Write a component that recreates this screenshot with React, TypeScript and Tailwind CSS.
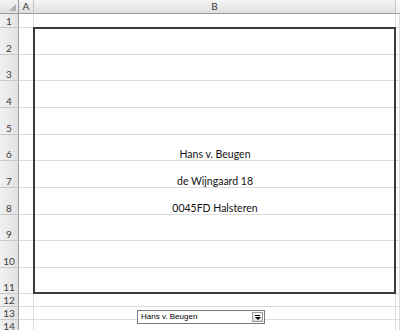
import React from "react";

// full class names so Tailwind picks them up; index = sheet row (0 = header)
const rowStart = [
    "row-start-1", "row-start-2", "row-start-3", "row-start-4", "row-start-5",
    "row-start-6", "row-start-7", "row-start-8", "row-start-9", "row-start-10",
    "row-start-11", "row-start-12", "row-start-13", "row-start-14", "row-start-15",
];
const colStart = ["col-start-1", "col-start-2", "col-start-3", "col-start-4"];

const rows = Array.from({ length: 14 }, (_, i) => i + 1);

const address: [number, string][] = [
    [6, "Hans v. Beugen"],
    [7, "de Wijngaard 18"],
    [8, "0045FD Halsteren"],
];

const RowHeader = ({ n }: { n: number }) => (
    <div
        className={`${rowStart[n]} col-start-1 flex items-end justify-center border-r border-b border-r-[#9a9a9a] border-b-[#c8c8c8] bg-gradient-to-r from-[#f1f1f1] to-[#e2e2e2] pb-[1px] text-[10px] leading-none text-[#3c3c3c]`}
    >
        {n}
    </div>
);

const Cell = ({ row, col }: { row: number; col: number }) => (
    <div className={`${rowStart[row]} ${colStart[col - 1]} border-r border-b border-[#dcdcdc] bg-white`} />
);

const ColHeader = ({ col, label }: { col: number; label: string }) => (
    <div
        className={`row-start-1 ${colStart[col - 1]} flex items-center justify-center border-r border-b border-r-[#c4c4c4] border-b-[#9a9a9a] bg-gradient-to-b from-[#f6f6f6] to-[#dfdfdf] text-[10px] text-[#3c3c3c]`}
    >
        {label}
    </div>
);

export default function App() {
    return (
        <div className="grid h-[330px] w-[400px] grid-cols-[19px_15px_362px_1fr] grid-rows-[14px_14px_27px_26px_27px_27px_26px_27px_27px_26px_27px_26px_13px_13px_13px_1fr] overflow-hidden bg-white font-['Lato','Liberation_Sans',sans-serif]">
            {/* select-all corner */}
            <div className="row-start-1 col-start-1 flex items-end justify-end border-r border-b border-[#9a9a9a] bg-gradient-to-b from-[#f4f4f4] to-[#dedede] p-[2px]">
                <svg width="7" height="7" viewBox="0 0 7 7">
                    <path d="M7 0 L7 7 L0 7 Z" fill="#b0b0b0" />
                </svg>
            </div>
            <ColHeader col={2} label="A" />
            <ColHeader col={3} label="B" />
            <div className="row-start-1 col-start-4 border-b border-b-[#9a9a9a] bg-gradient-to-b from-[#fafafa] to-[#ececec]" />

            {rows.map((r) => (
                <React.Fragment key={r}>
                    <RowHeader n={r} />
                    <Cell row={r} col={2} />
                    <Cell row={r} col={3} />
                    <Cell row={r} col={4} />
                </React.Fragment>
            ))}

            {/* thick outline round B2:B11 */}
            <div className="row-start-3 row-end-13 col-start-3 -ml-[1px] -mt-[1px] border-2 border-[#3a3a3a]" />

            {address.map(([r, text]) => (
                <div
                    key={r}
                    className={`${rowStart[r]} col-start-3 flex items-end justify-center pb-[2px] text-[10.5px] leading-none text-[#111]`}
                >
                    {text}
                </div>
            ))}

            {/* combo box sitting on row 13 */}
            <div className="row-start-14 row-end-16 col-start-3 ml-[103px] mt-[3px] flex h-[14px] w-[128px] items-stretch border border-[#7a7a7a] bg-white">
                <div className="flex flex-1 items-center pl-[3px] font-['Liberation_Sans',sans-serif] text-[8px] leading-none text-black">
                    Hans v. Beugen
                </div>
                <div className="m-[1px] flex w-[11px] flex-col items-center justify-center gap-[1px] border border-[#9a9a9a] bg-gradient-to-b from-[#fbfbfb] to-[#dcdcdc]">
                    <div className="h-[1px] w-[5px] bg-black" />
                    <div className="h-0 w-0 border-x-[3px] border-t-[3px] border-x-transparent border-t-black" />
                </div>
            </div>
        </div>
    );
}
